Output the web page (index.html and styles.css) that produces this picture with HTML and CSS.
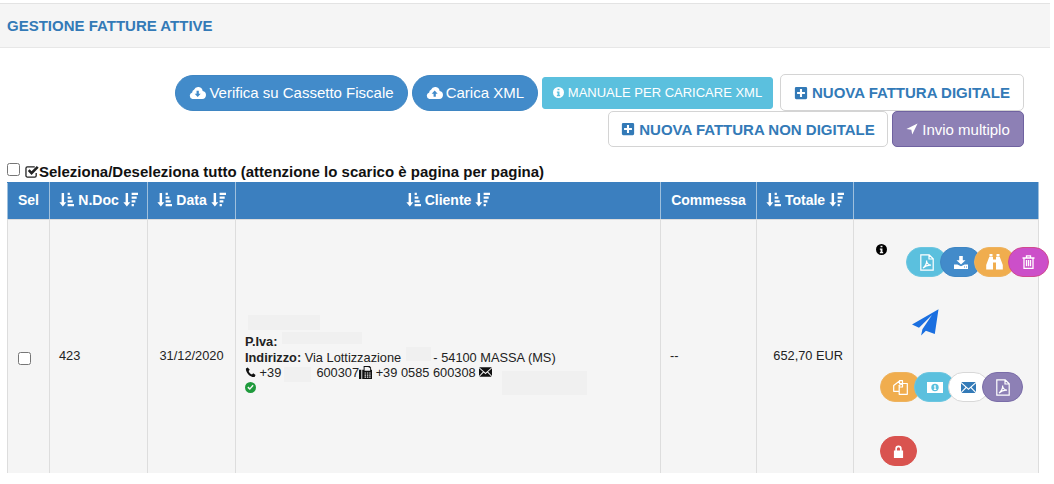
FILE: index.html
```html
<!DOCTYPE html>
<html lang="it">
<head>
<meta charset="utf-8">
<title>Gestione fatture attive</title>
<link rel="stylesheet" href="styles.css">
</head>
<body>
<svg class="sprite" xmlns="http://www.w3.org/2000/svg">
  <symbol id="i-cloud-down" viewBox="0 0 18 16"><path fill="currentColor" fill-rule="evenodd" d="M14.500 6.300A4.800 4.800 0 0 0 5.300 5 3 3 0 0 0 3.400 8 3.600 3.600 0 0 0 3.600 15H14a4.400 4.400 0 0 0 .5-8.700zM8 6h2.400v3.400h2L9.200 12.800 6 9.400h2z"/></symbol>
  <symbol id="i-cloud-up" viewBox="0 0 18 16"><path fill="currentColor" fill-rule="evenodd" d="M14.500 6.300A4.800 4.800 0 0 0 5.300 5 3 3 0 0 0 3.400 8 3.600 3.600 0 0 0 3.600 15H14a4.400 4.400 0 0 0 .5-8.700zM9.200 5.800l3.200 3.400h-2v3.400H8V9.200H6z"/></symbol>
  <symbol id="i-info" viewBox="0 0 16 16"><path fill="currentColor" fill-rule="evenodd" d="M8 0a8 8 0 1 0 0 16A8 8 0 0 0 8 0zM6.600 2.500h2.800v2.400H6.600zM5.600 6.500h3.800v5h1v2H5.600v-2h1v-3h-1z"/></symbol>
  <symbol id="i-plus" viewBox="0 0 16 16"><path fill="currentColor" fill-rule="evenodd" d="M2.500 1h11A1.500 1.500 0 0 1 15 2.500v11a1.500 1.500 0 0 1-1.500 1.500h-11A1.500 1.500 0 0 1 1 13.500v-11A1.500 1.500 0 0 1 2.500 1zM6.800 3.500v3.300H3.500v2.400h3.300v3.300h2.400V9.200h3.300V6.800H9.200V3.500z"/></symbol>
  <symbol id="i-arrow" viewBox="0 0 14 14"><path fill="currentColor" d="M13.500.5 7.300 13.500 6.200 7.800.5 7z"/></symbol>
  <symbol id="i-sort-asc" viewBox="0 0 16 16"><path fill="currentColor" d="M2.800 1h2.600v9.800h2.400L4.100 15.500.4 10.800h2.400zM9.200.8h2.400v2.500H9.200zM9.200 4.800h4v2.500h-4zM9.200 8.800h5.400v2.500H9.200zM9.200 12.800H16v2.500H9.200z"/></symbol>
  <symbol id="i-sort-desc" viewBox="0 0 16 16"><path fill="currentColor" d="M2.800 1h2.600v9.800h2.400L4.100 15.500.4 10.800h2.400zM9.200.8H16v2.500H9.200zM9.200 4.800h5.400v2.500H9.200zM9.200 8.800h4v2.500h-4zM9.200 12.800h2.400v2.500H9.200z"/></symbol>
  <symbol id="i-pdf" viewBox="0 0 14 17"><path fill="none" stroke="currentColor" stroke-width="1.200" d="M.8.800h8.400l4 4v11.400H.8zM9 .8v4.200h4.200M3 14c2-1 4-4.800 3.600-7.500-.4 2.700 2.500 4.800 4.400 4.600-3-.3-6 1.100-8 2.900z"/></symbol>
  <symbol id="i-save" viewBox="0 0 14 13"><path fill="currentColor" fill-rule="evenodd" d="M5.200 0h3.600v4.300h2.700L7 8.600 2.500 4.300h2.700zM0 8.500h3.400L7 10.300l3.600-1.800H14V13H0zM10 10.600v1h1v-1zM12 10.600v1h1v-1z"/></symbol>
  <symbol id="i-bino" viewBox="0 0 17 16"><path fill="currentColor" d="M3.500 0h3v2.500h-3zM10.500 0h3v2.500h-3zM3.200 3h3.800v2.500h3V3h3.800L16.800 11v4.500H10V8.500H7v7H.2V11z"/></symbol>
  <symbol id="i-trash" viewBox="0 0 13 14"><path fill="none" stroke="currentColor" stroke-width="1.300" d="M.5 3h12M2 3v10.300h9V3M4.500 3V.8h4V3M4.500 5v6.300M6.500 5v6.300M8.500 5v6.300"/></symbol>
  <symbol id="i-plane" viewBox="0 0 27 27"><path fill="currentColor" d="M26.500.300 0 15.600l7 3.100L20 6 10.400 20.200l-1.300 6.400 4.800-4.900 8.900 3.200z"/></symbol>
  <symbol id="i-copy" viewBox="0 0 15 15"><path fill="none" stroke="currentColor" stroke-width="1.200" stroke-linejoin="round" d="M6.500 3.500V.7h3v3zM6.500 1 .7 5.500v5.800h5M6 5.500l3.500-2h4.800v10.800H6.200V6zM9.500 3.800V7H6.500"/></symbol>
  <symbol id="i-money" viewBox="0 0 16 11"><path fill="currentColor" fill-rule="evenodd" d="M0 0h16v11H0zM8 1.800a3.700 3.700 0 1 0 0 7.400 3.700 3.700 0 0 0 0-7.400zM7.400 3.200h1.300v3.900h.7v.9H6.800v-.9h.6V4.500h-.7z"/></symbol>
  <symbol id="i-mail" viewBox="0 0 15 11"><path fill="currentColor" d="M.2 0h14.600L7.500 6.500zM0 1.300l4.500 4L0 10zM15 1.300V10l-4.500-4.700zM5.400 6.100l2.100 1.900 2.100-1.900 4.900 4.900H.5z"/></symbol>
  <symbol id="i-lock" viewBox="0 0 12 14"><path fill="currentColor" fill-rule="evenodd" d="M2.500 6V4a3.500 3.500 0 0 1 7 0v2h1.500v8H1V6zM4.300 6h3.400V4a1.700 1.700 0 0 0-3.400 0z"/></symbol>
  <symbol id="i-phone" viewBox="0 0 12 12"><path fill="currentColor" d="M3 .5 1 1.500c-.5 4 4.500 10 9.500 9.500l1-2.300-2.500-1.800-1.400 1.300C6 7.500 4.500 6 4 4.300L5.200 3z"/></symbol>
  <symbol id="i-fax" viewBox="0 0 14 14"><path fill="currentColor" fill-rule="evenodd" d="M0 4h2.500v10H0zM3.500 4H5V0h6.500L13 1.500V4h1v10H3.500zM6 1v4h6V2h-1.500V1zM6 7v1.200h1.500V7zM8.500 7v1.200H10V7zM11 7v1.200h1.500V7zM6 9.200v1.200h1.500V9.200zM8.500 9.200v1.200H10V9.200zM11 9.200v1.200h1.500V9.200zM6 11.400v1.200h1.500v-1.200zM8.500 11.400v1.200H10v-1.200zM11 11.400v1.200h1.500v-1.200z"/></symbol>
  <symbol id="i-check" viewBox="0 0 16 16"><path fill="currentColor" fill-rule="evenodd" d="M8 0a8 8 0 1 0 0 16A8 8 0 0 0 8 0zM12.600 5.600 7 11.800 3.400 8.300 5 6.700l2 1.900 4-4.500z"/></symbol>
  <symbol id="i-checksq" viewBox="0 0 15 14"><path fill="none" stroke="currentColor" stroke-width="1.400" d="M12 8.500v3a1.500 1.500 0 0 1-1.500 1.500h-8A1.500 1.500 0 0 1 1 11.500v-8A1.500 1.500 0 0 1 2.500 2h8"/><path fill="currentColor" d="M3 6.500 5 4.500 7 6.700 12.700 1l2 2L7 10.700z"/></symbol>
</svg>

<div class="page">
  <header class="heading"><h1 class="title">GESTIONE FATTURE ATTIVE</h1></header>

  <div class="toolbar">
    <a class="btn pill primary"><svg class="ic ic-cloud"><use href="#i-cloud-down"/></svg>Verifica su Cassetto Fiscale</a>
    <a class="btn pill primary"><svg class="ic ic-cloud"><use href="#i-cloud-up"/></svg>Carica XML</a>
    <a class="btn manual"><svg class="ic ic-sm"><use href="#i-info"/></svg>MANUALE PER CARICARE XML</a>
    <a class="btn outline wide-gap"><svg class="ic ic-plus"><use href="#i-plus"/></svg>NUOVA FATTURA DIGITALE</a>
    <a class="btn outline"><svg class="ic ic-plus"><use href="#i-plus"/></svg>NUOVA FATTURA NON DIGITALE</a>
    <a class="btn violet"><svg class="ic ic-arrow"><use href="#i-arrow"/></svg>Invio multiplo</a>
  </div>

  <div class="select-all">
    <input type="checkbox" class="check">
    <svg class="ic-checksq"><use href="#i-checksq"/></svg><span>Seleziona/Deseleziona tutto (attenzione lo scarico è pagina per pagina)</span>
  </div>

  <table class="grid">
    <colgroup>
      <col class="c-sel"><col class="c-doc"><col class="c-data"><col class="c-cli"><col class="c-com"><col class="c-tot"><col class="c-act">
    </colgroup>
    <thead>
      <tr>
        <th>Sel</th>
        <th><svg class="sort"><use href="#i-sort-asc"/></svg> N.Doc <svg class="sort"><use href="#i-sort-desc"/></svg></th>
        <th><svg class="sort"><use href="#i-sort-asc"/></svg> Data <svg class="sort"><use href="#i-sort-desc"/></svg></th>
        <th><svg class="sort"><use href="#i-sort-asc"/></svg> Cliente <svg class="sort"><use href="#i-sort-desc"/></svg></th>
        <th>Commessa</th>
        <th><svg class="sort"><use href="#i-sort-asc"/></svg> Totale <svg class="sort"><use href="#i-sort-desc"/></svg></th>
        <th></th>
      </tr>
    </thead>
    <tbody>
      <tr>
        <td class="sel"><input type="checkbox" class="check row-check"></td>
        <td class="num">423</td>
        <td class="center">31/12/2020</td>
        <td>
          <div class="client">
            <span class="redact r1"></span><span class="redact r2"></span><span class="redact r3"></span><span class="redact r4"></span><span class="redact r5"></span>
            <div class="client-line"><b>P.Iva:</b></div>
            <div class="client-line"><b>Indirizzo:</b> Via Lottizzazione <span class="gap-a"></span> - 54100 MASSA (MS)</div>
            <div class="client-line"><svg class="ic-phone"><use href="#i-phone"/></svg> +39 <span class="gap-b"></span> 600307<svg class="ic-line"><use href="#i-fax"/></svg> +39 0585 600308 <svg class="ic-line ic-mailblk"><use href="#i-mail"/></svg></div>
            <div class="client-line"><svg class="ic-ok"><use href="#i-check"/></svg></div>
          </div>
        </td>
        <td class="num-dash">--</td>
        <td class="total">652,70 EUR</td>
        <td class="actions">
          <div class="act-row first">
            <svg class="ic-tip"><use href="#i-info"/></svg>
            <a class="round c-info"><svg class="g-pdf"><use href="#i-pdf"/></svg></a>
            <a class="round c-blue"><svg class="g-save"><use href="#i-save"/></svg></a>
            <a class="round c-orange"><svg class="g-bino"><use href="#i-bino"/></svg></a>
            <a class="round c-magenta"><svg class="g-trash"><use href="#i-trash"/></svg></a>
          </div>
          <div class="plane-row"><svg class="plane"><use href="#i-plane"/></svg></div>
          <div class="act-row second">
            <a class="round c-orange"><svg class="g-copy"><use href="#i-copy"/></svg></a>
            <a class="round c-info"><svg class="g-money"><use href="#i-money"/></svg></a>
            <a class="round c-white"><svg class="g-mail"><use href="#i-mail"/></svg></a>
            <a class="round c-violet"><svg class="g-pdf"><use href="#i-pdf"/></svg></a>
          </div>
          <div class="act-row third">
            <a class="round short c-red"><svg class="g-lock"><use href="#i-lock"/></svg></a>
          </div>
        </td>
      </tr>
    </tbody>
  </table>
</div>
</body>
</html>
```
FILE: styles.css
```css
* { box-sizing: border-box; }
html, body { margin: 0; padding: 0; background: #fff; }
body { font-family: "Liberation Sans", Arial, sans-serif; color: #222; overflow: hidden; }
.sprite { display: none; }

.page { width: 1050px; height: 473px; overflow: hidden; padding-top: 3px; }

.heading {
  height: 45px;
  background: #f5f5f5;
  border-top: 1px solid #e3e3e3;
  border-bottom: 1px solid #e7e7e7;
  padding: 14px 7px 0;
}
.title { margin: 0; font-size: 15px; line-height: 16px; font-weight: 700; color: #337ab7; }

.toolbar {
  display: flex;
  flex-wrap: wrap;
  justify-content: flex-end;
  align-items: center;
  align-content: flex-start;
  column-gap: 4px;
  margin-top: 26px;
  padding: 0 26px 0 170px;
  height: 74px;
}
.btn {
  display: inline-flex;
  align-items: center;
  justify-content: center;
  color: #fff;
  white-space: nowrap;
  border: 1px solid transparent;
}
.ic { fill: currentColor; flex: none; margin-right: 4px; }
.ic-cloud { width: 17px; height: 15px; margin-right: 3px; }
.ic-sm { width: 11px; height: 11px; }
.ic-arrow { width: 12px; height: 12px; }
.ic-plus { width: 14px; height: 14px; }

.pill { height: 36px; border-radius: 18px; background: #428bca; border-color: #3f86c3; font-size: 15px; padding: 0 13px; }
.manual { width: 231px; height: 32px; border-radius: 3px; background: #5bc0de; border-color: #5bc0de; font-size: 13px; }
.outline { width: 280px; height: 36px; border-radius: 5px; background: #fff; border-color: #d4d4d4; color: #337ab7; font-size: 15px; font-weight: 700; }
.wide-gap { width: 244px; height: 37px; margin-left: 3px; }
.violet { width: 132px; height: 36px; border-radius: 5px; background: #8d80b5; border-color: #6f62a0; font-size: 15px; }

.select-all { display: flex; align-items: center; height: 17px; margin: 15px 0 0 7px; font-size: 15px; font-weight: 700; color: #111; }
.check { margin: 0; width: 13px; height: 13px; }
.select-all .check { align-self: flex-start; }
.ic-checksq { width: 14px; height: 13px; margin-left: 5px; color: #222; flex: none; }

.grid { border-collapse: collapse; table-layout: fixed; width: 1031px; margin: 2px 0 0 7px; font-size: 12.8px; color: #222; }
.c-sel { width: 42px; }
.c-doc { width: 98px; }
.c-data { width: 88px; }
.c-cli { width: 425px; }
.c-com { width: 96px; }
.c-tot { width: 97px; }
.c-act { width: 185px; }

.grid th {
  height: 37px;
  background: #3b7fbf;
  color: #fff;
  font-size: 14px;
  font-weight: 700;
  text-align: center;
  border: 1px solid #9fc0dd;
  border-top-color: #3b7fbf;
  border-bottom-color: #ddd;
  padding: 0 0 2px;
  white-space: nowrap;
}
.sort { width: 15px; height: 15px; vertical-align: -2px; }

.grid td { background: #f5f5f5; border: 1px solid #ddd; padding: 0 9px; vertical-align: middle; }
.center { text-align: center; }
.grid td.sel { padding: 0 0 0 10px; }
.grid td.total { text-align: right; padding-right: 10px; }
.row-check { vertical-align: -7px; }

.client { position: relative; padding-top: 20px; }
.client-line { line-height: 15.500px; white-space: nowrap; }
.gap-a { display: inline-block; width: 25px; }
.gap-b { display: inline-block; width: 28px; }
.ic-phone { width: 11px; height: 11px; vertical-align: -1px; color: #111; }
.ic-line { width: 13px; height: 13px; vertical-align: -2px; color: #111; }
.ic-mailblk { height: 10px; vertical-align: 0; }
.ic-ok { width: 11px; height: 11px; color: #1f9a3c; vertical-align: 0; }

.redact { position: absolute; background: #f0f0f0; display: block; }
.r1 { left: 3px; top: 1px; width: 72px; height: 15px; }
.r2 { left: 37px; top: 18px; width: 80px; height: 12px; }
.r3 { left: 161px; top: 33px; width: 25px; height: 14px; }
.r4 { left: 39px; top: 53px; width: 27px; height: 15px; }
.r5 { left: 257px; top: 57px; width: 85px; height: 24px; }

.grid td.actions { padding: 0; vertical-align: top; height: 271px; }
.act-row { display: flex; align-items: flex-start; }
.act-row.first { padding: 24px 0 0 22px; height: 57px; }
.act-row.second { padding-left: 26px; height: 64px; margin-top: 36px; }
.act-row.third { padding-left: 26px; height: 36px; }
.plane-row { padding-left: 58px; height: 27px; margin-top: 32px; }
.plane { width: 27px; height: 27px; color: #1a6fe0; display: block; }

.ic-tip { width: 11px; height: 11px; color: #000; flex: none; margin-right: 19px; }
.round {
  display: flex;
  align-items: center;
  justify-content: center;
  width: 41px;
  height: 30px;
  border-radius: 15px;
  color: #fff;
  border: 1px solid transparent;
  flex: none;
  margin-left: -7px;
}
.first .round { margin-top: 3px; }
.first .round:nth-of-type(1) { margin-left: 0; }
.second .round:first-child { margin-left: 0; }
.third .round { margin-left: 0; }
.g-pdf { width: 14px; height: 17px; }
.g-save { width: 14px; height: 13px; }
.g-bino { width: 17px; height: 16px; }
.g-trash { width: 13px; height: 14px; }
.g-copy { width: 15px; height: 15px; }
.g-money { width: 16px; height: 11px; }
.g-mail { width: 15px; height: 11px; }
.g-lock { width: 11px; height: 13px; }
.short { width: 37px; }
.c-info { background: #5bc0de; border-color: #6cc6e0; }
.c-blue { background: #428bca; border-color: #3f86c3; }
.c-orange { background: #f0ad4e; border-color: #eeb35f; }
.c-magenta { background: #cc4fc9; border-color: #d04a8f; }
.c-white { background: #fff; border-color: #d8d8d8; color: #337ab7; }
.c-violet { background: #8d80b5; border-color: #7a6da8; }
.c-red { background: #d9534f; border-color: #d9534f; }
```
